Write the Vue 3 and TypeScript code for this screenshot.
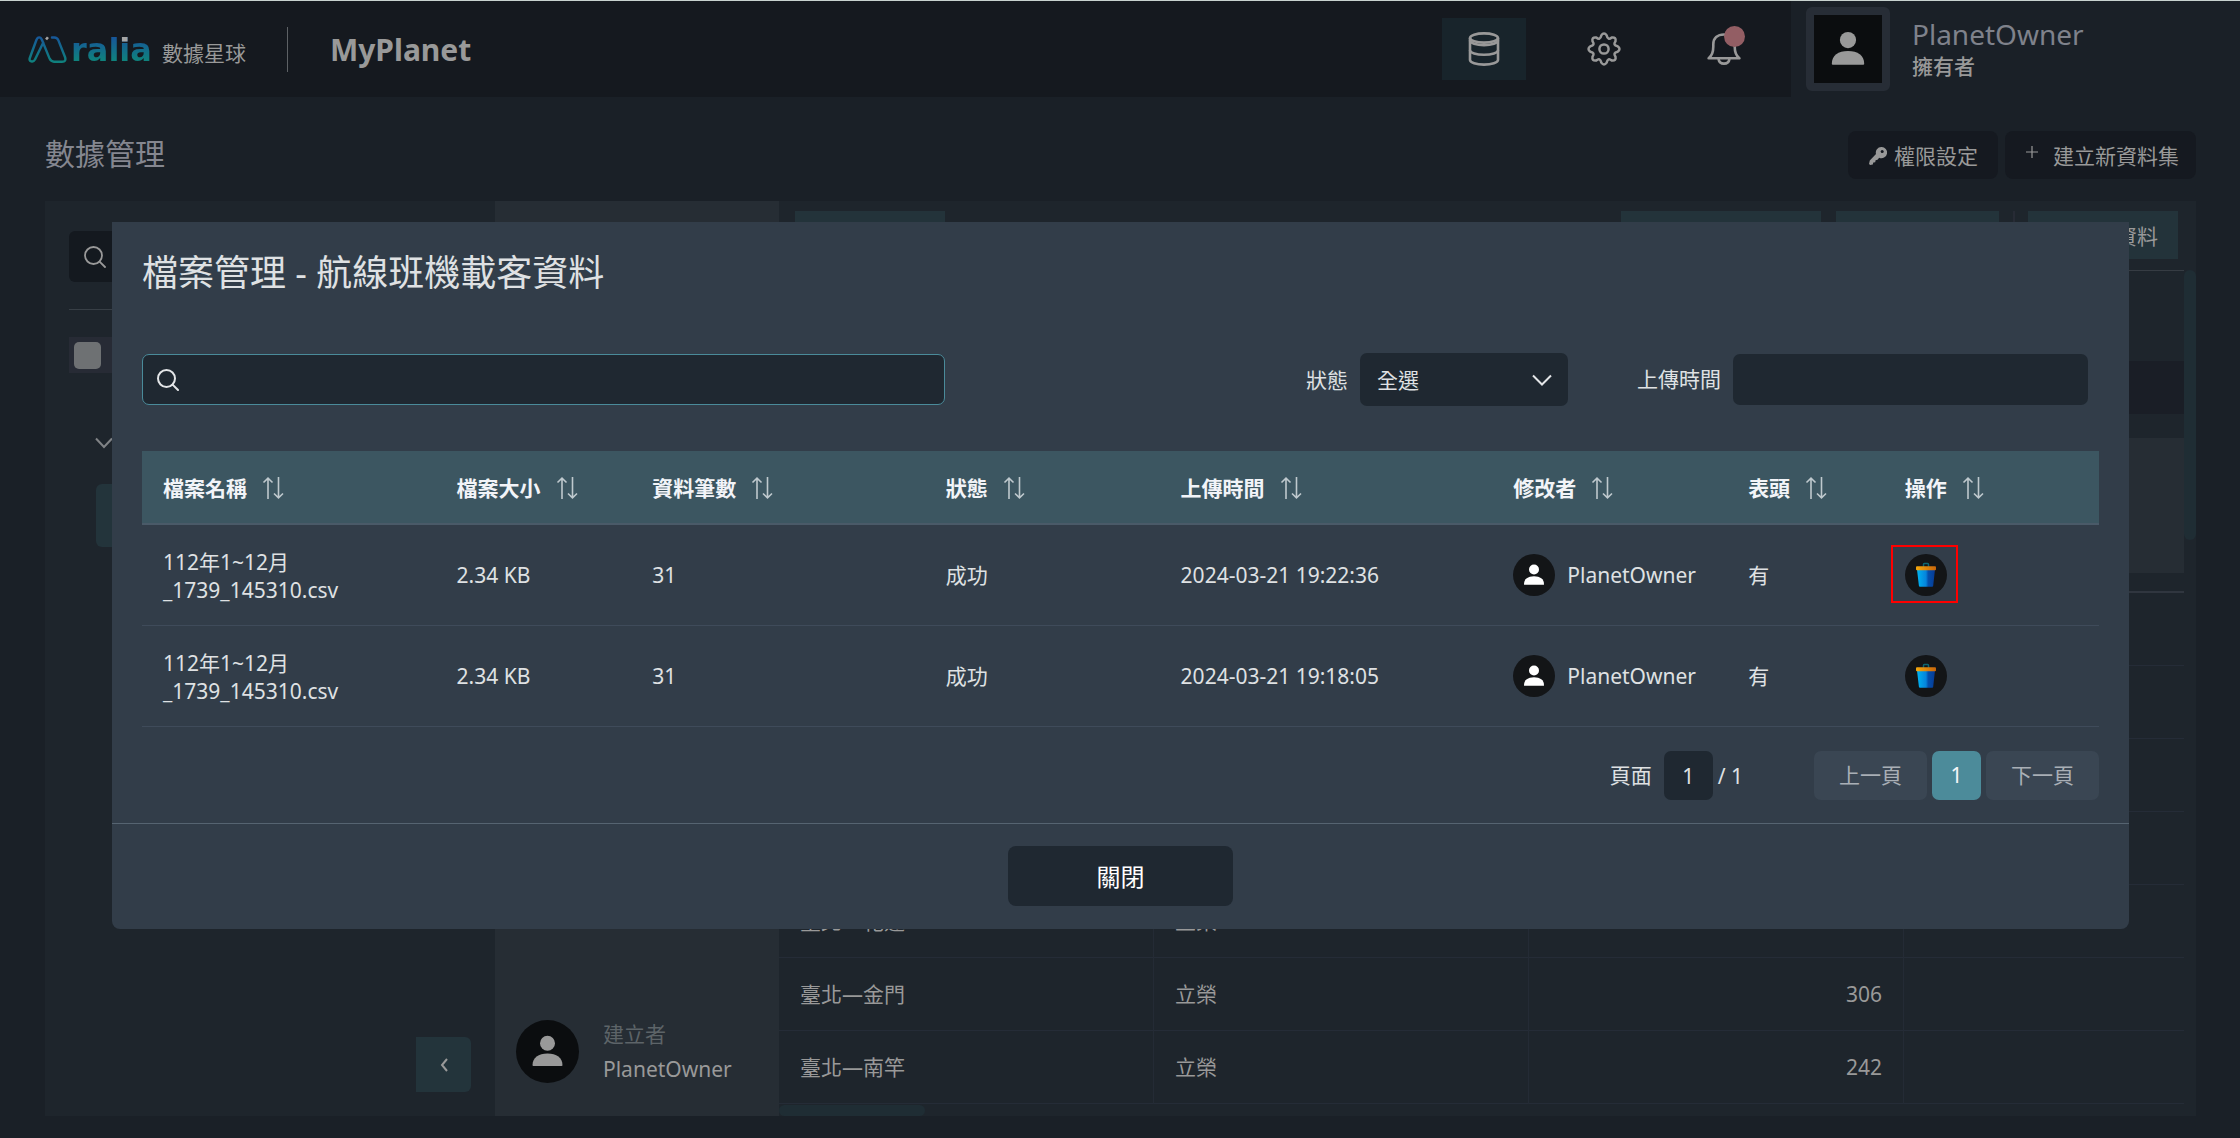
<script setup lang="ts">
import { ref } from 'vue'

interface Column {
  label: string
  width: string
}

interface UploadedFile {
  id: number
  name: string
  size: string
  count: number
  status: string
  time: string
  owner: string
  header: string
  marked: boolean
}

interface RouteRow {
  route: string
  airline: string
  total: string
}

const keyword = ref('')
const uploadTime = ref('')
const status = ref('all')
const page = ref('1')

const columns: Column[] = [
  { label: '檔案名稱', width: '15%' },
  { label: '檔案大小', width: '10%' },
  { label: '資料筆數', width: '15%' },
  { label: '狀態', width: '12%' },
  { label: '上傳時間', width: '17%' },
  { label: '修改者', width: '12%' },
  { label: '表頭', width: '8%' },
  { label: '操作', width: '11%' },
]

const files: UploadedFile[] = [
  {
    id: 1,
    name: '112年1~12月_1739_145310.csv',
    size: '2.34 KB',
    count: 31,
    status: '成功',
    time: '2024-03-21 19:22:36',
    owner: 'PlanetOwner',
    header: '有',
    marked: true,
  },
  {
    id: 2,
    name: '112年1~12月_1739_145310.csv',
    size: '2.34 KB',
    count: 31,
    status: '成功',
    time: '2024-03-21 19:18:05',
    owner: 'PlanetOwner',
    header: '有',
    marked: false,
  },
]

const blank: RouteRow = { route: '', airline: '', total: '' }
const routes: RouteRow[] = [
  blank,
  blank,
  blank,
  blank,
  { route: '臺北—花蓮', airline: '立榮', total: '70' },
  { route: '臺北—金門', airline: '立榮', total: '306' },
  { route: '臺北—南竿', airline: '立榮', total: '242' },
]
</script>

<template>
  <div class="page">
    <header class="topbar">
      <a class="brand" href="#">
        <svg class="brand-mark" viewBox="0 0 39 27" fill="none" stroke-linecap="round" stroke-linejoin="round">
          <defs>
            <linearGradient id="brandInk" x1="0" y1="0" x2="0" y2="27" gradientUnits="userSpaceOnUse">
              <stop offset="0" stop-color="#17569a" />
              <stop offset="1" stop-color="#0f827c" />
            </linearGradient>
          </defs>
          <path
            d="M15.3 6.5 L7 23.5 Q5.6 26 3.4 25.4 Q.9 24.6 1.8 22 L8.4 4 Q9.4 1.4 11.2 1.4 Q13 1.4 14 4 L21.6 22.6 Q23 25.7 26 25.7 H34 Q38.6 25.7 37 21 L30.4 4.4 Q29.2 1.5 26.4 1.5 H24"
            stroke="url(#brandInk)"
            stroke-width="2.4"
          />
          <path d="M18 1.6 L20 3.2" stroke="#a5a5a5" stroke-width="3" stroke-linecap="butt" />
        </svg>
        <span class="brand-name">ralia</span>
        <span class="brand-sub">數據星球</span>
      </a>
      <span class="divider"></span>
      <strong class="planet">MyPlanet</strong>

      <nav class="tools">
        <button type="button" class="tool active" aria-label="資料">
          <svg viewBox="0 0 34 34" fill="none" stroke="#999" stroke-width="2.6">
            <ellipse cx="17" cy="6" rx="14" ry="4.6" />
            <path d="M3 6v22c0 2.6 6.3 4.6 14 4.6s14-2 14-4.6V6" />
            <path d="M3 8.500c0 2.600 6.300 4.600 14 4.600s14-2 14-4.600" />
            <path d="M3 18.200c0 2.600 6.300 4.600 14 4.600s14-2 14-4.600" />
          </svg>
        </button>
        <button type="button" class="tool" aria-label="設定">
          <svg viewBox="0 0 34 34" fill="none" stroke="#999" stroke-width="2.5" stroke-linejoin="round">
            <circle cx="17" cy="17" r="4.600" />
            <path
              d="M14.300 3.400 Q17 -.4 19.700 3.400 C20.500 7 22.200 7.600 24.700 5.500 Q29.400 4.800 28.500 9.300 C26.600 12 27.200 13.600 30.600 14.300 Q34.400 17 30.600 19.700 C27.200 20.400 26.600 22 28.500 24.700 Q29.400 29.200 24.700 28.500 C22.200 26.400 20.500 27 19.700 30.600 Q17 34.400 14.300 30.600 C13.500 27 11.800 26.400 9.300 28.500 Q4.600 29.200 5.500 24.700 C7.400 22 6.800 20.400 3.400 19.700 Q-.4 17 3.400 14.300 C6.800 13.600 7.400 12 5.500 9.300 Q4.600 4.800 9.300 5.500 C11.800 7.600 13.500 7 14.300 3.400 Z"
            />
          </svg>
        </button>
        <button type="button" class="tool" aria-label="通知">
          <svg viewBox="0 0 34 34" fill="none" stroke="#999" stroke-width="2.600" stroke-linejoin="round">
            <path d="M1.600 26.200C5.500 23.500 6.300 20 6.300 14.500V12.500C6.300 6 10.500 2.500 17 2.500S27.700 6 27.700 12.500V14.500C27.700 20 28.500 23.500 32.400 26.200Z" />
            <path d="M11.500 27C12.500 33.200 21.500 33.200 22.500 27" />
          </svg>
          <span class="badge"></span>
        </button>
      </nav>

      <div class="user">
        <span class="user-photo">
          <svg viewBox="0 0 42 42" fill="#999">
            <circle cx="21" cy="15.500" r="5" />
            <path d="M11 30.200C11 25 15 22.300 21 22.300S31 25 31 30.200Q31 30.700 30.400 30.700H11.600Q11 30.700 11 30.200Z" />
          </svg>
        </span>
        <span class="user-text">
          <span class="user-name">PlanetOwner</span>
          <span class="user-role">擁有者</span>
        </span>
      </div>
    </header>

    <div class="heading">
      <h1>數據管理</h1>
      <button type="button" class="ghost">
        <svg class="key" viewBox="0 0 18 18">
          <path d="M12.300 0a5.500 5.500 0 0 0-5.300 7L.8 13.600 0 17l1.200 1 2.600-.4.500-2 1.900-.3.400-2 1.900-.5 1.700-2.100A5.600 5.600 0 1 0 12.300 0Z" fill="#999" />
          <circle cx="13.200" cy="4.600" r="1.500" fill="#151920" />
        </svg>
        <span>權限設定</span>
      </button>
      <button type="button" class="ghost add">
        <svg class="plus" viewBox="0 0 12 12" stroke="#999" stroke-width="1.200"><path d="M6 0v12M0 6h12" /></svg>
        <span>建立新資料集</span>
      </button>
    </div>

    <main class="board">
      <aside class="sidebar">
        <div class="side-search">
          <svg viewBox="0 0 22 22" fill="none" stroke="#999" stroke-width="1.800" stroke-linecap="round">
            <circle cx="9.500" cy="9.500" r="8.500" />
            <path d="M15.600 15.600 21 21" />
          </svg>
        </div>
        <label class="side-check"><input type="checkbox" aria-label="全選" /></label>
        <svg class="side-caret" viewBox="0 0 18 12" fill="none" stroke="#808386" stroke-width="2">
          <path d="M1 1.500 9 10 17 1.500" />
        </svg>
        <div class="side-item"></div>
        <button type="button" class="collapse" aria-label="收合">
          <svg viewBox="0 0 10 16" fill="none" stroke="#999" stroke-width="2"><path d="M8 2 3 8 8 14" /></svg>
        </button>
      </aside>

      <section class="info">
        <span class="avatar large">
          <svg viewBox="0 0 42 42" fill="#999">
            <circle cx="21" cy="15.500" r="5" />
            <path d="M11 30.200C11 25 15 22.300 21 22.300S31 25 31 30.200Q31 30.700 30.400 30.700H11.600Q11 30.700 11 30.200Z" />
          </svg>
        </span>
        <span class="creator">
          <span class="creator-label">建立者</span>
          <span>PlanetOwner</span>
        </span>
      </section>

      <section class="content">
        <div class="toolbar">
          <span class="tab first"></span>
          <span class="tab second"></span>
          <span class="tab third"></span>
          <span class="tab-divider"></span>
          <button type="button" class="tab fourth">資料</button>
        </div>
        <div class="scroll">
          <div class="scroll-body">
            <div class="strip"></div>
            <div class="block"></div>
            <table class="routes">
              <colgroup>
                <col class="wide" />
                <col class="wide" />
                <col class="wide" />
                <col />
              </colgroup>
              <tbody>
                <tr v-for="(row, i) in routes" :key="i">
                  <td>{{ row.route }}</td>
                  <td>{{ row.airline }}</td>
                  <td class="num">{{ row.total }}</td>
                  <td></td>
                </tr>
              </tbody>
            </table>
            <div class="thumb-x"></div>
          </div>
          <div class="thumb-y"></div>
        </div>
      </section>
    </main>

    <div class="overlay">
      <div class="modal" role="dialog" aria-labelledby="modal-title">
        <div class="modal-body">
          <h2 id="modal-title">檔案管理 - 航線班機載客資料</h2>

          <div class="filters">
            <label class="search">
              <svg viewBox="0 0 22 22" fill="none" stroke="#e4e6e8" stroke-width="2" stroke-linecap="round">
                <circle cx="9.500" cy="9.500" r="8.500" />
                <path d="M15.600 15.600 21 21" />
              </svg>
              <input v-model="keyword" type="text" aria-label="搜尋" />
            </label>
            <label class="field-label" for="status">狀態</label>
            <span class="select">
              <select id="status" v-model="status">
                <option value="all">全選</option>
              </select>
              <svg viewBox="0 0 20 12" fill="none" stroke="#e4e6e8" stroke-width="2"><path d="M1 1.500 10 10.500 19 1.500" /></svg>
            </span>
            <label class="field-label time-label" for="time">上傳時間</label>
            <input id="time" v-model="uploadTime" class="time" type="text" />
          </div>

          <table class="files">
            <colgroup>
              <col v-for="c in columns" :key="c.label" :style="{ width: c.width }" />
            </colgroup>
            <thead>
              <tr>
                <th v-for="c in columns" :key="c.label" scope="col">
                  <span class="th">
                    {{ c.label }}
                    <svg viewBox="0 0 22 22" fill="none" stroke="#bfc9ce" stroke-width="1.600">
                      <path d="M6 22V1.500M1.500 5.500 6 1.200 10.500 5.500M16.500 0V20.500M12 16.500 16.500 20.800 21 16.500" />
                    </svg>
                  </span>
                </th>
              </tr>
            </thead>
            <tbody>
              <tr v-for="f in files" :key="f.id">
                <td class="file-name">{{ f.name }}</td>
                <td>{{ f.size }}</td>
                <td>{{ f.count }}</td>
                <td>{{ f.status }}</td>
                <td>{{ f.time }}</td>
                <td>
                  <span class="owner">
                    <span class="avatar">
                      <svg viewBox="0 0 42 42" fill="#fff">
                        <circle cx="21" cy="15.500" r="5" />
                        <path d="M11 30.200C11 25 15 22.300 21 22.300S31 25 31 30.200Q31 30.700 30.400 30.700H11.600Q11 30.700 11 30.200Z" />
                      </svg>
                    </span>
                    {{ f.owner }}
                  </span>
                </td>
                <td>{{ f.header }}</td>
                <td>
                  <button type="button" class="avatar trash" :class="{ marked: f.marked }" aria-label="刪除">
                    <svg viewBox="0 0 42 42">
                      <defs>
                        <linearGradient :id="'bin' + f.id" x1="0" x2="1">
                          <stop offset="0" stop-color="#00b4f0" />
                          <stop offset=".5" stop-color="#0584dc" />
                          <stop offset=".62" stop-color="#0450ac" />
                          <stop offset="1" stop-color="#073a94" />
                        </linearGradient>
                        <linearGradient :id="'lid' + f.id" x1="0" x2="1">
                          <stop offset="0" stop-color="#f5a80c" />
                          <stop offset="1" stop-color="#c8660c" />
                        </linearGradient>
                      </defs>
                      <path d="M18.500 13v-2.500q0-.9.900-.9h3.200q.9 0 .9.900V13" fill="none" stroke="#0e6670" stroke-width="1.500" />
                      <path d="M12 15.500h18l-1.800 16.200q-.1 1-1 1H15q-1 0-1.100-1Z" :fill="`url(#bin${f.id})`" />
                      <rect x="11" y="12.300" width="20" height="4" rx="1" :fill="`url(#lid${f.id})`" />
                    </svg>
                  </button>
                </td>
              </tr>
            </tbody>
          </table>

          <div class="pager">
            <label class="page-label" for="page">頁面</label>
            <input id="page" v-model="page" class="page-input" type="text" />
            <span class="page-total">/ 1</span>
            <button type="button" class="step">上一頁</button>
            <button type="button" class="step current">1</button>
            <button type="button" class="step">下一頁</button>
          </div>
        </div>
        <div class="modal-foot">
          <button type="button" class="close">關閉</button>
        </div>
      </div>
    </div>
  </div>
</template>

<style>
body {
  background: #1a2027;
}
</style>

<style scoped>
.page,
.page * {
  box-sizing: border-box;
}

.page {
  position: relative;
  display: flex;
  flex-direction: column;
  min-height: 100vh;
  padding-bottom: 22px;
  overflow: hidden;
  background: #1a2027;
  color: #999;
  font-family: 'Noto Sans', 'Noto Sans CJK TC', sans-serif;
  font-size: 21px;
  line-height: 28px;
}

button,
input,
select {
  margin: 0;
  padding: 0;
  border: 0;
  font: inherit;
  color: inherit;
  background: none;
}

svg {
  display: block;
  flex: none;
}

/* Top bar */
.topbar {
  display: flex;
  align-items: center;
  height: 97px;
  border-top: 1px solid #c8d2cf;
  background: #15191f;
}

.brand {
  display: flex;
  align-items: center;
  margin-left: 28px;
  color: #999;
  text-decoration: none;
}

.brand-mark {
  width: 39px;
  height: 27px;
}

/* The second letter "i" carries a grey dot over the gradient */
.brand-name {
  margin: 2px 0 0 4px;
  font-family: 'DejaVu Sans', sans-serif;
  font-weight: 700;
  font-size: 32px;
  line-height: 36px;
  background:
    linear-gradient(#a5a5a5, #a5a5a5) 48px 0 / 12px 10px no-repeat,
    linear-gradient(#17569a 15%, #0f827c 80%);
  -webkit-background-clip: text;
  background-clip: text;
  color: transparent;
}

.brand-sub {
  margin: 8px 0 0 10px;
}

.divider {
  width: 1px;
  height: 45px;
  margin-left: 41px;
  background: #5d6165;
}

.planet {
  margin: 2px 0 0 42px;
  font-size: 30px;
  line-height: 40px;
}

.tools {
  display: flex;
  gap: 36px;
  margin-left: auto;
}

.tool {
  position: relative;
  display: flex;
  align-items: center;
  justify-content: center;
  width: 84px;
  height: 62px;
}

.tool.active {
  background: #18242b;
}

.tool svg {
  width: 34px;
  height: 34px;
}

.badge {
  position: absolute;
  top: 8px;
  right: 21px;
  width: 21px;
  height: 21px;
  border-radius: 50%;
  background: #935e64;
}

.user {
  display: flex;
  align-items: center;
  align-self: stretch;
  width: 449px;
  margin-left: 25px;
  padding-left: 15px;
  background: #1a2027;
}

.user-photo {
  display: flex;
  width: 84px;
  height: 84px;
  border: 8px solid #272d36;
  border-radius: 6px;
  background: #0b0d0f;
}

.user-photo svg {
  width: 68px;
  height: 68px;
}

.user-text {
  display: flex;
  flex-direction: column;
  margin: 0 0 3px 22px;
}

.user-name {
  color: #7f828b;
  font-size: 28px;
  line-height: 36px;
}

.user-role {
  font-weight: 500;
}

/* Page heading */
.heading {
  display: flex;
  align-items: flex-start;
  height: 104px;
  padding: 34px 44px 0 45px;
}

h1 {
  margin: 0 auto 0 0;
  color: #858790;
  font-size: 30px;
  font-weight: 400;
  line-height: 46px;
}

.ghost {
  display: flex;
  align-items: center;
  height: 48px;
  padding: 2px 20px 0 21px;
  border-radius: 8px;
  background: #151920;
}

.key {
  width: 18px;
  height: 18px;
  margin-right: 7px;
}

.add {
  margin-left: 7px;
  padding: 2px 17px 0 21px;
}

.plus {
  width: 12px;
  height: 12px;
  margin: 0 15px 8px 0;
}

/* Board behind the dialog */
.board {
  display: flex;
  flex: 1;
  margin: 0 44px 0 45px;
  background: #1e252c;
}

.sidebar {
  display: flex;
  flex-direction: column;
  width: 450px;
  padding: 30px 24px 24px;
}

.side-search {
  display: flex;
  align-items: center;
  height: 51px;
  padding-left: 15px;
  border-radius: 6px;
  background: #14191f;
}

.side-search svg {
  width: 22px;
  height: 22px;
}

.side-check {
  display: flex;
  align-items: center;
  height: 64px;
  margin-top: 27px;
  padding: 27px 0 0;
  border-top: 1px solid #383f46;
  background: #272b35 content-box;
}

.side-check input {
  appearance: none;
  width: 27px;
  height: 27px;
  margin-left: 5px;
  border-radius: 5px;
  background: #6e7173;
}

.side-caret {
  width: 18px;
  height: 12px;
  margin: 64px 0 0 26px;
}

.side-item {
  height: 63px;
  margin: 35px 0 0 27px;
  border-radius: 6px;
  background: #23343b;
}

.collapse {
  display: flex;
  align-items: center;
  justify-content: center;
  align-self: flex-end;
  width: 55px;
  height: 55px;
  margin-top: auto;
  border-radius: 0 6px 6px 0;
  background: #23343b;
}

.collapse svg {
  width: 10px;
  height: 16px;
}

.info {
  display: flex;
  align-items: flex-end;
  width: 284px;
  padding: 0 21px 33px;
  background: #262d34;
}

.avatar {
  display: block;
  flex: none;
  width: 42px;
  height: 42px;
  border-radius: 50%;
  background: #131517;
}

.avatar.large {
  width: 63px;
  height: 63px;
  background: #0b0d0f;
}

.avatar svg {
  width: 100%;
  height: 100%;
}

.creator {
  display: flex;
  flex-direction: column;
  gap: 7px;
  margin-left: 24px;
}

.creator-label {
  color: #5d6468;
}

.content {
  display: flex;
  flex: 1;
  flex-direction: column;
}

.toolbar {
  display: flex;
  height: 69px;
  padding: 10px 18px 0 16px;
}

.tab {
  height: 48px;
  background: #23333a;
}

.tab.first {
  width: 150px;
  margin-right: auto;
}

.tab.second {
  width: 200px;
}

.tab.third {
  width: 163px;
  margin-left: 15px;
}

.tab-divider {
  width: 2px;
  height: 48px;
  margin: 0 13px 0 14px;
  background: #272b35;
}

.tab.fourth {
  width: 150px;
  padding: 2px 20px 0 0;
  text-align: right;
}

.scroll {
  display: flex;
  flex: 1;
}

.scroll-body {
  flex: 1;
  border-top: 1px solid #363c43;
}

.strip {
  height: 53px;
  margin-top: 90px;
  background: #1a1e26;
}

.block {
  height: 135px;
  margin: 24px 0 18px;
  background: #262d34;
}

.routes {
  width: 100%;
  table-layout: fixed;
  border-spacing: 0;
  border-top: 2px solid #30363f;
}

.wide {
  width: 375px;
}

.routes td {
  height: 73px;
  padding: 0 21px;
  border-right: 1px solid #242b35;
  border-bottom: 1px solid #252c37;
}

.routes td:last-child {
  border-right: 0;
}

.routes .num {
  text-align: right;
}

.thumb-x {
  width: 146px;
  height: 11px;
  margin-top: 1px;
  border-radius: 6px;
  background: #1f2d34;
}

.thumb-y {
  width: 12px;
  height: 270px;
  border-radius: 6px;
  background: #1f2d34;
}

/* Dialog */
.overlay {
  position: absolute;
  inset: 0;
  padding: 222px 111px 0 112px;
}

.modal {
  border-radius: 0 0 8px 8px;
  background: #323d49;
  color: #dfe1e3;
}

.modal-body {
  padding: 27px 30px 23px;
}

h2 {
  margin: 0;
  font-size: 36px;
  font-weight: 400;
  line-height: 48px;
}

.filters {
  display: flex;
  align-items: center;
  margin-top: 56px;
  padding-right: 11px;
}

.search {
  display: flex;
  align-items: center;
  width: 803px;
  height: 51px;
  margin-right: auto;
  padding: 0 14px;
  border: 1px solid #4a8b9a;
  border-radius: 7px;
  background: #1f2831;
}

.search svg {
  width: 22px;
  height: 22px;
}

.search input {
  flex: 1;
  height: 40px;
  margin-left: 10px;
  outline: 0;
}

.field-label {
  margin-right: 12px;
}

.select {
  position: relative;
}

.select select {
  display: block;
  appearance: none;
  width: 208px;
  height: 53px;
  padding: 0 17px;
  border-radius: 7px;
  background: #1f2831;
}

.select svg {
  position: absolute;
  top: 21px;
  right: 16px;
  width: 20px;
  height: 12px;
  pointer-events: none;
}

.time-label {
  margin-left: 69px;
  padding-bottom: 2px;
}

.time {
  width: 355px;
  height: 51px;
  padding: 0 16px;
  border-radius: 7px;
  background: #1f2831;
}

.files {
  width: 100%;
  margin-top: 45px;
  table-layout: fixed;
  border-spacing: 0;
}

.files th {
  height: 74px;
  padding: 2px 0 0 21px;
  border-bottom: 2px solid #4a5a68;
  background: #3c5661;
  color: #f2f4f8;
  text-align: left;
}

.th {
  display: flex;
  align-items: center;
  gap: 15px;
}

.th svg {
  width: 22px;
  height: 22px;
}

.files td {
  height: 101px;
  padding: 0 21px;
  border-bottom: 1px solid #3f4b5a;
}

.files .file-name {
  padding-top: 2px;
}

.owner {
  display: flex;
  align-items: center;
  gap: 12px;
}

.trash {
  position: relative;
}

.trash.marked::after {
  content: '';
  position: absolute;
  inset: -9px -11px -7px -14px;
  border: 2px solid #f00;
}

.pager {
  display: flex;
  align-items: center;
  justify-content: flex-end;
  gap: 5px;
  margin-top: 24px;
}

.page-label {
  padding-bottom: 2px;
}

.page-input {
  width: 49px;
  height: 49px;
  margin-left: 7px;
  border-radius: 7px;
  background: #1f2831;
  text-align: center;
}

.page-total {
  margin-right: 66px;
}

.step {
  width: 113px;
  height: 49px;
  padding-bottom: 2px;
  border-radius: 7px;
  background: #3a4653;
  color: #a9afb6;
}

.step.current {
  width: 49px;
  background: #4c8b9a;
  color: #f4f6f8;
}

.modal-foot {
  display: flex;
  justify-content: center;
  padding: 22px 0 23px;
  border-top: 1px solid #566471;
}

.close {
  width: 225px;
  height: 60px;
  padding-top: 2px;
  border-radius: 8px;
  background: #1f2831;
  color: #fff;
  font-size: 24px;
}
</style>
